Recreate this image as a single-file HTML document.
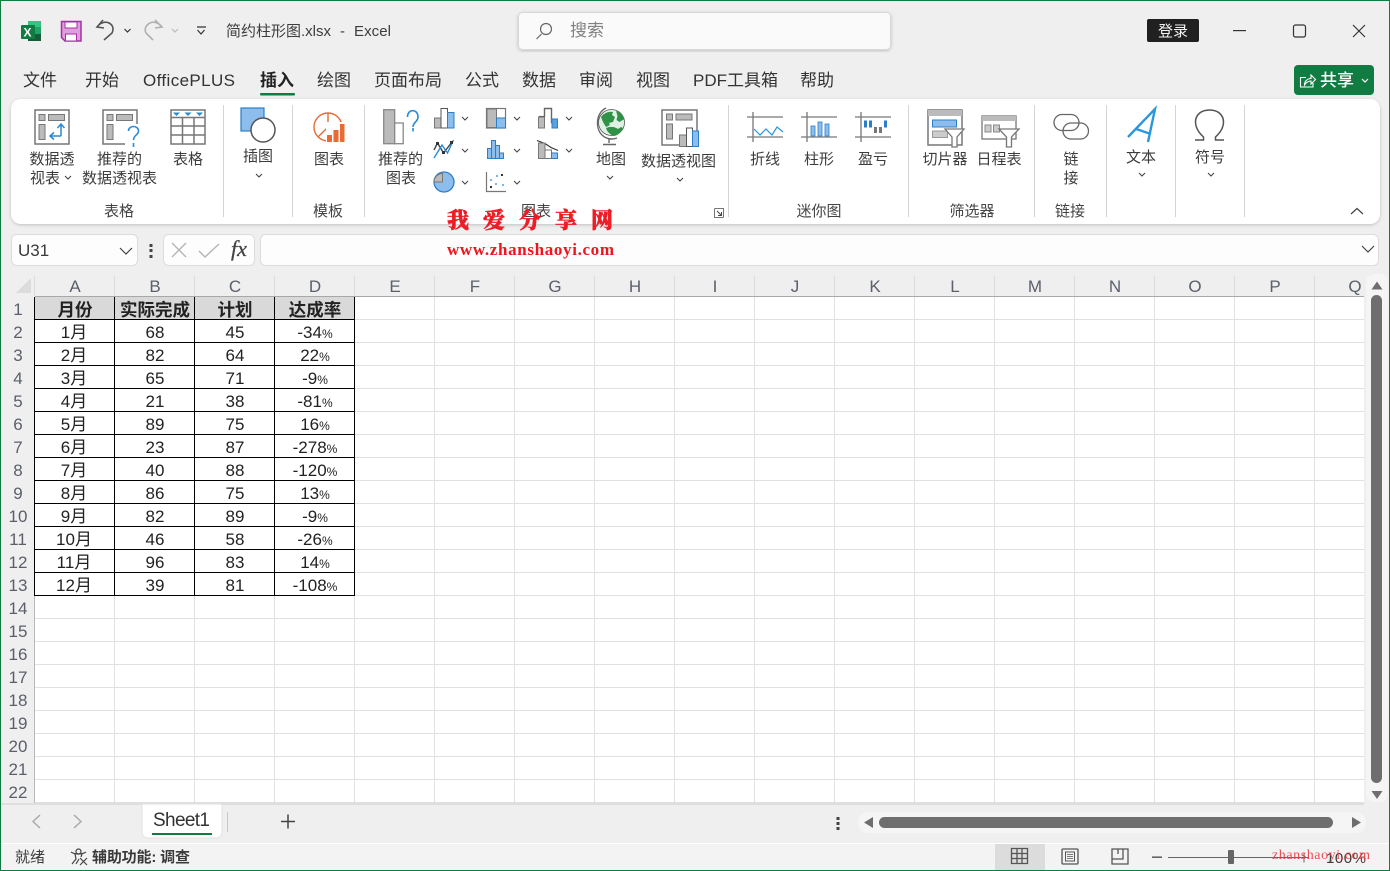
<!DOCTYPE html>
<html><head><meta charset="utf-8"><style>
html,body{margin:0;padding:0;width:1390px;height:871px;overflow:hidden;background:#efefef}
svg{display:block}
text{font-family:"Liberation Sans","Noto Sans CJK SC",sans-serif;fill:#3a3a3a}
.t{font-size:17px;fill:#333}
.r{font-size:15px;text-anchor:middle;fill:#3c3c3c}
.g{font-size:15px;text-anchor:middle;fill:#444}
.c{font-size:17px;text-anchor:middle;fill:#222}
.h{font-size:17.500px;text-anchor:middle;fill:#222;font-weight:700}
.ch{font-size:17px;text-anchor:middle;fill:#5a5f6a}
.rh{font-size:17px;text-anchor:middle;fill:#5a5f6a}
.p{font-size:12px}
.wm{font-family:"Noto Serif CJK SC","Liberation Serif",serif;font-size:22px;font-weight:900;fill:#ee1c25;text-anchor:middle;stroke:#ee1c25;stroke-width:.5px}
</style></head><body>
<svg width="1390" height="871" viewBox="0 0 1390 871" xmlns="http://www.w3.org/2000/svg">
<defs>
<pattern id="grid" x="35" y="297" width="80" height="23" patternUnits="userSpaceOnUse">
<rect width="80" height="23" fill="#fff"/>
<rect x="79" width="1" height="23" fill="#e0e0e0"/>
<rect y="22" width="80" height="1" fill="#e0e0e0"/>
</pattern>
<filter id="sh" x="-2%" y="-8%" width="104%" height="116%"><feDropShadow dx="0" dy="1" stdDeviation="1.500" flood-color="#000" flood-opacity=".2"/></filter>
</defs>
<rect width="1390" height="871" fill="#efefef"/>

<!-- title bar -->
<g>
<rect x="28" y="21" width="13" height="20" rx="1" fill="#21a366"/>
<rect x="28" y="21" width="13" height="6" fill="#33c481"/>
<rect x="28" y="34" width="13" height="7" fill="#185c37"/>
<rect x="21" y="25" width="14" height="14" rx="1" fill="#107c41"/>
<text x="23.500" y="36.500" style="font-size:12px;font-weight:700;fill:#fff">X</text>
<path d="M61.500 21.500h19.500v19.500h-16l-3.500-3.500z" fill="#df9fdc" stroke="#a62ea6" stroke-width="1.500"/>
<rect x="65" y="22" width="12" height="6" fill="#fff" stroke="#a62ea6"/>
<rect x="65.500" y="34" width="11" height="7" fill="#fff" stroke="#a62ea6"/>
<path d="M103 20l-6 7 7 1M97 27c3-4 8-6 12-4 4 2 5 6 3 10l-8 7" fill="none" stroke="#555" stroke-width="1.600"/>
<path d="M124.500 29l3 3 3-3" fill="none" stroke="#333" stroke-width="1.200"/>
<path d="M155 20l7 7-7 1M162 27c-3-4-8-6-12-4-4 2-6 6-4 10l7 7" fill="none" stroke="#b0b0b0" stroke-width="1.600"/>
<path d="M172 29l3 3 3-3" fill="none" stroke="#bbb" stroke-width="1.200"/>
<path d="M197 27h9M197.500 30l3.500 4 3.500-4" fill="none" stroke="#333" stroke-width="1.200"/>
<text x="226" y="36" style="font-size:15px;fill:#3c3c3c">简约柱形图.xlsx</text>
<text x="340" y="36" style="font-size:15px;fill:#3c3c3c">-</text>
<text x="354" y="36" style="font-size:15px;fill:#3c3c3c" textLength="37">Excel</text>

<rect x="518.500" y="12.500" width="372" height="37" rx="4" fill="#fafafa" stroke="#d8d8d8" filter="url(#sh)"/>
<circle cx="546" cy="29" r="5.500" fill="none" stroke="#666" stroke-width="1.200"/>
<path d="M541.500 34l-5 5" stroke="#666" stroke-width="1.200"/>
<text x="570" y="36" style="font-size:17px;fill:#808080">搜索</text>

<rect x="1147" y="19" width="52" height="23" rx="2" fill="#202020"/>
<text x="1173" y="36" style="font-size:15px;fill:#f2f2f2;text-anchor:middle">登录</text>
<rect x="1233" y="30" width="13" height="1.200" fill="#333"/>
<rect x="1293.500" y="25" width="12" height="12" rx="2" fill="none" stroke="#333" stroke-width="1.200"/>
<path d="M1353 25l12 12M1365 25l-12 12" stroke="#333" stroke-width="1.200"/>
</g>

<!-- tabs -->
<g class="tabs">
<text class="t" x="23" y="86">文件</text>
<text class="t" x="85" y="86">开始</text>
<text class="t" x="143" y="86" textLength="92">OfficePLUS</text>
<text class="t" x="260" y="86" style="font-weight:700;fill:#222">插入</text>
<rect x="260" y="93" width="35" height="2.500" fill="#107c41" rx="1"/>
<text class="t" x="317" y="86">绘图</text>
<text class="t" x="374" y="86">页面布局</text>
<text class="t" x="465" y="86">公式</text>
<text class="t" x="522" y="86">数据</text>
<text class="t" x="579" y="86">审阅</text>
<text class="t" x="636" y="86">视图</text>
<text class="t" x="693" y="86">PDF工具箱</text>
<text class="t" x="800" y="86">帮助</text>
<rect x="1294" y="65" width="80" height="30" rx="4" fill="#107c41"/>
<path d="M1306 77.500h-5.500v9.500h12.500v-4M1304.500 85c0-4 3-6.500 6.500-6.500v-3.500l4.500 4.500-4.500 4.500v-3c-2.500 0-4.500 1-6.500 4z" fill="none" stroke="#fff" stroke-width="1.100"/>
<text x="1337" y="86" style="font-size:17px;font-weight:500;fill:#fff;text-anchor:middle">共享</text>
<path d="M1362 79l3 3 3-3" fill="none" stroke="#fff" stroke-width="1.200"/>
</g>

<!-- ribbon -->
<rect x="11" y="99" width="1369" height="125" rx="10" fill="#fff" filter="url(#sh)"/>
<g fill="#d4d4d4">
<rect x="223" y="105" width="1" height="112"/><rect x="292" y="105" width="1" height="112"/>
<rect x="364" y="105" width="1" height="112"/><rect x="728" y="105" width="1" height="112"/>
<rect x="908" y="105" width="1" height="112"/><rect x="1034" y="105" width="1" height="112"/>
<rect x="1106" y="105" width="1" height="112"/><rect x="1175" y="105" width="1" height="112"/>
<rect x="1244" y="105" width="1" height="112"/>
</g>

<!-- pivot -->
<g stroke="#777" stroke-width="1.500" fill="#fff">
<rect x="35" y="110" width="34" height="34"/>
<g fill="#bbb" stroke-width="1"><rect x="39" y="114.500" width="6" height="6"/><rect x="48.500" y="114.500" width="16" height="6"/><rect x="39" y="124.500" width="6" height="15"/></g>
<rect x="103" y="110" width="34" height="34"/>
<g fill="#bbb" stroke-width="1"><rect x="107" y="114.500" width="6" height="6"/><rect x="116.500" y="114.500" width="16" height="6"/><rect x="107" y="124.500" width="6" height="15"/></g>
</g>
<path d="M61 136V125M57.500 128l3.500-4 3.500 4M61 136H51M54 132.500l-4 3.500 4 3.500" fill="none" stroke="#2a8ad4" stroke-width="1.500"/>
<rect x="125" y="124" width="16" height="23" fill="#fff"/>
<path d="M128.500 131c0-6 10-6 10 0 0 4-5 4-5 9M133.500 143v4" fill="none" stroke="#2a8ad4" stroke-width="1.600"/>
<!-- table -->
<g fill="none" stroke="#777" stroke-width="1.500">
<rect x="171" y="110" width="34" height="34" fill="#fff"/>
<path d="M171 117.500h34M171 126h34M171 135h34M182.500 117.500v26.500M194 117.500v26.500"/>
</g>
<path d="M173 112.500h7l-3.500 3.500zM184.500 112.500h7l-3.500 3.500zM196 112.500h7l-3.500 3.500z" fill="#2a8ad4"/>
<!-- illustration -->
<rect x="241" y="108" width="23" height="23" fill="#8dbdec" stroke="#2a7fc9" stroke-width="1.200"/>
<circle cx="263" cy="130" r="12" fill="#fff" stroke="#555" stroke-width="1.500"/>
<!-- charts template -->
<g fill="none" stroke="#ea6a35" stroke-width="1.400">
<circle cx="328" cy="127" r="14"/><path d="M328 113V127L341 122M328 127l-10 10"/>
</g>
<rect x="326" y="122" width="19" height="21" fill="#fff"/>
<path d="M327 135h5v7h-5zM333.500 130h5v12h-5zM340 124h4.500v18H340z" fill="#ea6a35"/>
<!-- recommended chart -->
<rect x="383.700" y="109.700" width="11" height="34" fill="#bbb" stroke="#888" stroke-width="1.300"/>
<rect x="394.700" y="123" width="8.500" height="20.700" fill="#fff" stroke="#888" stroke-width="1.300"/>
<path d="M407.500 117c0-8.500 10.500-8.500 10.500 0 0 5-5 5-5 10M413 128v3.500" fill="none" stroke="#2a8ad4" stroke-width="1.600"/>
<!-- col -->
<rect x="434.500" y="118" width="6.500" height="10" fill="#bbb" stroke="#777"/>
<rect x="441" y="108.500" width="6.500" height="19.500" fill="#fff" stroke="#555"/>
<rect x="447.500" y="112.500" width="6.500" height="15.500" fill="#8dbdec" stroke="#2a7fc9"/>
<!-- line -->
<path d="M434 150l3.500-7 6 10 8.500-11" fill="none" stroke="#444" stroke-width="1.400"/>
<path d="M434 158l8-13 5.500 8 6-13" fill="none" stroke="#2a8ad4" stroke-width="1.400"/>
<g fill="#333"><rect x="436" y="142" width="3" height="3"/><rect x="442" y="151" width="3" height="3"/><rect x="450" y="141" width="3" height="3"/></g>
<!-- pie -->
<circle cx="444" cy="182" r="10" fill="#8dbdec" stroke="#2a7fc9" stroke-width="1.300"/>
<path d="M434 182a8.500 8.500 0 0 1 8.500-8.500v8.500z" fill="#bbb" stroke="#777"/>
<!-- treemap -->
<rect x="486.500" y="108.500" width="19" height="19.500" fill="#fff" stroke="#777" stroke-width="1.200"/>
<rect x="487" y="109" width="9.500" height="18.500" fill="#bbb" stroke="#777"/>
<rect x="496.500" y="118" width="9" height="10" fill="#8dbdec" stroke="#2a7fc9"/>
<!-- histogram -->
<path d="M487.500 148.500h4v10h-4zM491.500 140.500h4v18h-4zM495.500 145.500h4v13h-4zM499.500 153h4v5.500h-4z" fill="#8dbdec" stroke="#2a7fc9"/>
<!-- scatter -->
<path d="M486.500 172v19.500H506" fill="none" stroke="#777" stroke-width="1.200"/>
<g fill="#333"><rect x="490" y="186" width="2" height="2"/><rect x="501" y="174" width="2" height="2"/></g>
<g fill="#7ab5ea"><rect x="490" y="179" width="2" height="2"/><rect x="495" y="183" width="2" height="2"/><rect x="502" y="184" width="2" height="2"/><rect x="496" y="175" width="2" height="2"/></g>
<!-- waterfall -->
<rect x="538.500" y="117" width="6" height="11" fill="#bbb" stroke="#777"/>
<path d="M544.500 117v-8.500h7v14h6" fill="none" stroke="#666" stroke-width="1.400"/>
<path d="M539 116.500h5" stroke="#666" stroke-width="1.200"/>
<rect x="552" y="119" width="5.500" height="9" fill="#5aa0de" stroke="#2a7fc9"/>
<!-- combo -->
<path d="M537 140.500l8 3 6 4 7 3" fill="none" stroke="#333" stroke-width="1.200"/>
<rect x="538.500" y="143" width="6.500" height="15.500" fill="#bbb" stroke="#777"/>
<rect x="545" y="150" width="6.500" height="8.500" fill="#fff" stroke="#777"/>
<rect x="551.500" y="153" width="6" height="5.500" fill="#8dbdec" stroke="#2a7fc9"/>
<!-- chevrons -->
<g fill="none" stroke="#444" stroke-width="1.100">
<path d="M462 117l3 3 3-3M462 149l3 3 3-3M462 181l3 3 3-3M514 117l3 3 3-3M514 149l3 3 3-3M514 181l3 3 3-3M566 117l3 3 3-3M566 149l3 3 3-3"/>
<path d="M65 176l3 3 3-3M256 174l3 3 3-3M607 176l3 3 3-3M677 178l3 3 3-3M1139 173l3 3 3-3M1208 173l3 3 3-3"/>
</g>
<!-- globe -->
<circle cx="611.500" cy="122.500" r="13" fill="#dff1e4" stroke="#555" stroke-width=".8"/>
<path d="M601 117c3-4 8-6 12-5l-1 3 3 2-2 5-4 1 1 2-4 2-3-5zM616 111c4 1 7 4 8.500 8l-5 3-3-2 1-4zM606 128c5-2 9-1 12 1l3-2 2 1c-2 5-6 8-10 8-3-2-6-4-7-8z" fill="#2f9247"/>
<path d="M606 108c-10 5-11 20-4 27 4 4 10 5 15 3M609 139v4M603 144.500h13" fill="none" stroke="#666" stroke-width="1.400"/>
<!-- pivot chart -->
<rect x="662" y="110" width="35" height="35" fill="#fff" stroke="#777" stroke-width="1.500"/>
<g fill="#bbb" stroke="#777"><rect x="666.500" y="114" width="6" height="6"/><rect x="676" y="114" width="16" height="6"/><rect x="666.500" y="124" width="6" height="15"/></g>
<rect x="679.500" y="135" width="7" height="11.500" fill="#bbb" stroke="#777"/>
<rect x="686.500" y="128" width="6" height="18.500" fill="#fff" stroke="#555"/>
<rect x="692.500" y="131" width="6" height="15.500" fill="#8dbdec" stroke="#2a7fc9"/>
<!-- launcher -->
<path d="M714.500 208.500h9v9M714.500 208.500v9h9" fill="none" stroke="#777"/>
<path d="M717 211l4.500 4.500M721.500 212v3.500h-3.500" fill="none" stroke="#444"/>

<!-- sparklines -->
<g fill="none" stroke="#777" stroke-width="1.300">
<path d="M747 117h36M747 137h36M753 112v30M801 117h36M801 137h36M807 112v30M855 117h36M855 137h36M861 112v30"/>
</g>
<path d="M754 129l6 6 6-6 6 6 5-8 6 5" fill="none" stroke="#2a97dc" stroke-width="1.200"/>
<g fill="#8dbdec" stroke="#2a7fc9" stroke-width=".8"><rect x="811" y="126" width="4" height="10"/><rect x="818" y="122" width="4" height="14"/><rect x="825" y="124" width="4" height="12"/></g>
<g fill="#2a7fc9"><rect x="864" y="120.500" width="3" height="7"/><rect x="869" y="120.500" width="3" height="7"/><rect x="884" y="120.500" width="3" height="7"/></g>
<g fill="#777"><rect x="874" y="127" width="3" height="6"/><rect x="879" y="127" width="3" height="6"/></g>

<!-- slicer -->
<rect x="928" y="110" width="34" height="35" fill="#fff" stroke="#777" stroke-width="1.500"/>
<rect x="928" y="110" width="34" height="6" fill="#bbb"/>
<rect x="932.500" y="120" width="24" height="7" fill="#8dbdec" stroke="#2a7fc9"/>
<rect x="932.500" y="131" width="15" height="6.500" fill="#ccc" stroke="#999"/>
<path d="M945 129h19l-7 8v10h-5v-10z" fill="#fff" stroke="#777" stroke-width="1.300"/>
<!-- timeline -->
<rect x="982" y="116" width="34" height="23" fill="#fff" stroke="#777" stroke-width="1.300"/>
<rect x="982" y="116" width="34" height="5" fill="#bbb"/>
<rect x="985" y="125" width="6" height="7" fill="#ccc" stroke="#888"/>
<rect x="993.500" y="125" width="6" height="7" fill="#ccc" stroke="#888"/>
<path d="M999 129h20l-7.500 8v10h-5v-10z" fill="#fff" stroke="#777" stroke-width="1.300"/>
<!-- link -->
<g fill="none" stroke="#666" stroke-width="1.300">
<rect x="1054" y="114.500" width="25" height="16" rx="8"/>
<rect x="1063" y="123" width="25.500" height="16" rx="8"/>
</g>
<!-- text A -->
<path d="M1128 137L1155 109L1148 142M1136 129L1151 134" fill="none" stroke="#2a97dc" stroke-width="2.400"/>
<!-- omega -->
<path d="M1195 140h8.500v-3C1198 132 1195.500 127 1195.500 122 1195.500 115 1201 110 1209.500 110S1223.500 115 1223.500 122C1223.500 127 1221 132 1215.500 137v3h8.500" fill="none" stroke="#555" stroke-width="1.500"/>
<!-- collapse -->
<path d="M1351 214l6-5.500 6 5.500" fill="none" stroke="#444" stroke-width="1.200"/>

<!-- ribbon labels -->
<text class="r" x="52" y="164">数据透</text><text class="r" x="45" y="183">视表</text>
<text class="r" x="119.500" y="164">推荐的</text><text class="r" x="119.500" y="183">数据透视表</text>
<text class="r" x="188" y="164">表格</text><text class="r" x="258" y="161">插图</text><text class="r" x="329" y="164">图表</text>
<text class="r" x="400.500" y="164">推荐的</text><text class="r" x="401" y="183">图表</text>
<text class="r" x="611" y="164">地图</text><text class="r" x="678.500" y="166">数据透视图</text>
<text class="r" x="765" y="164">折线</text><text class="r" x="819" y="164">柱形</text><text class="r" x="873" y="164">盈亏</text>
<text class="r" x="945" y="164">切片器</text><text class="r" x="999" y="164">日程表</text>
<text class="r" x="1071" y="164">链</text><text class="r" x="1071" y="183">接</text>
<text class="r" x="1141" y="162">文本</text><text class="r" x="1210" y="162">符号</text>
<text class="g" x="119" y="216">表格</text><text class="g" x="328" y="216">模板</text><text class="g" x="536" y="216">图表</text>
<text class="g" x="819" y="216">迷你图</text><text class="g" x="972" y="216">筛选器</text><text class="g" x="1070" y="216">链接</text>

<!-- formula bar -->
<rect x="11.500" y="234.500" width="126" height="31" rx="5" fill="#fdfdfd" stroke="#dcdcdc"/>
<text x="18" y="256" style="font-size:17px;fill:#3a3a3a">U31</text>
<path d="M120 248l6 6 6-6" fill="none" stroke="#444" stroke-width="1.200"/>
<g fill="#444"><rect x="149.500" y="244" width="3" height="3"/><rect x="149.500" y="249" width="3" height="3"/><rect x="149.500" y="255" width="3" height="3"/></g>
<rect x="163.500" y="234.500" width="91" height="31" rx="5" fill="#fdfdfd" stroke="#dcdcdc"/>
<path d="M172 243l14 14M186 243l-14 14" stroke="#b5b5b5" stroke-width="1.400"/>
<path d="M199 251l6 6 14-13" fill="none" stroke="#b5b5b5" stroke-width="1.400"/>
<text x="231" y="256" style="font-family:'Liberation Serif',serif;font-size:22px;font-style:italic;fill:#444;stroke:#444;stroke-width:.3px">fx</text>
<rect x="260.500" y="234.500" width="1118" height="31" rx="5" fill="#fdfdfd" stroke="#dcdcdc"/>
<path d="M1362 246l6 6 6-6" fill="none" stroke="#444" stroke-width="1.200"/>

<!-- grid -->
<rect x="35" y="297" width="1329" height="506" fill="url(#grid)"/>
<rect x="1" y="803" width="1363" height="2" fill="#dedede"/>
<!-- headers -->
<rect x="35" y="296" width="1329" height="1" fill="#a8a8a8"/>
<rect x="34" y="297" width="1" height="506" fill="#b8b8b8"/>
<path d="M31 278v15H16z" fill="#dcdcdc"/>
<g fill="#dcdcdc"><rect x="34" y="276" width="1" height="20"/><rect x="114" y="276" width="1" height="20"/><rect x="194" y="276" width="1" height="20"/><rect x="274" y="276" width="1" height="20"/><rect x="354" y="276" width="1" height="20"/><rect x="434" y="276" width="1" height="20"/><rect x="514" y="276" width="1" height="20"/><rect x="594" y="276" width="1" height="20"/><rect x="674" y="276" width="1" height="20"/><rect x="754" y="276" width="1" height="20"/><rect x="834" y="276" width="1" height="20"/><rect x="914" y="276" width="1" height="20"/><rect x="994" y="276" width="1" height="20"/><rect x="1074" y="276" width="1" height="20"/><rect x="1154" y="276" width="1" height="20"/><rect x="1234" y="276" width="1" height="20"/><rect x="1314" y="276" width="1" height="20"/></g>
<g>
<text class="ch" x="75" y="292">A</text><text class="ch" x="155" y="292">B</text><text class="ch" x="235" y="292">C</text><text class="ch" x="315" y="292">D</text><text class="ch" x="395" y="292">E</text><text class="ch" x="475" y="292">F</text><text class="ch" x="555" y="292">G</text><text class="ch" x="635" y="292">H</text><text class="ch" x="715" y="292">I</text><text class="ch" x="795" y="292">J</text><text class="ch" x="875" y="292">K</text><text class="ch" x="955" y="292">L</text><text class="ch" x="1035" y="292">M</text><text class="ch" x="1115" y="292">N</text><text class="ch" x="1195" y="292">O</text><text class="ch" x="1275" y="292">P</text><text class="ch" x="1355" y="292">Q</text>
</g>
<g>
<text class="rh" x="18" y="315">1</text><text class="rh" x="18" y="338">2</text><text class="rh" x="18" y="361">3</text><text class="rh" x="18" y="384">4</text><text class="rh" x="18" y="407">5</text><text class="rh" x="18" y="430">6</text><text class="rh" x="18" y="453">7</text><text class="rh" x="18" y="476">8</text><text class="rh" x="18" y="499">9</text><text class="rh" x="18" y="522">10</text><text class="rh" x="18" y="545">11</text><text class="rh" x="18" y="568">12</text><text class="rh" x="18" y="591">13</text><text class="rh" x="18" y="614">14</text><text class="rh" x="18" y="637">15</text><text class="rh" x="18" y="660">16</text><text class="rh" x="18" y="683">17</text><text class="rh" x="18" y="706">18</text><text class="rh" x="18" y="729">19</text><text class="rh" x="18" y="752">20</text><text class="rh" x="18" y="775">21</text><text class="rh" x="18" y="798">22</text>
</g>

<!-- table -->
<rect x="35" y="297" width="320" height="22" fill="#d9d9d9"/>
<g fill="#000">
<rect x="34" y="297" width="1" height="299"/><rect x="114" y="297" width="1" height="299"/><rect x="194" y="297" width="1" height="299"/><rect x="274" y="297" width="1" height="299"/><rect x="354" y="297" width="1" height="299"/>
<rect x="34" y="319" width="321" height="1"/><rect x="34" y="342" width="321" height="1"/><rect x="34" y="365" width="321" height="1"/><rect x="34" y="388" width="321" height="1"/><rect x="34" y="411" width="321" height="1"/><rect x="34" y="434" width="321" height="1"/><rect x="34" y="457" width="321" height="1"/><rect x="34" y="480" width="321" height="1"/><rect x="34" y="503" width="321" height="1"/><rect x="34" y="526" width="321" height="1"/><rect x="34" y="549" width="321" height="1"/><rect x="34" y="572" width="321" height="1"/><rect x="34" y="595" width="321" height="1"/>
</g>
<text class="h" x="75" y="316">月份</text><text class="h" x="155" y="316">实际完成</text><text class="h" x="235" y="316">计划</text><text class="h" x="315" y="316">达成率</text>
<g>
<text class="c" x="74" y="338">1月</text><text class="c" x="155" y="338">68</text><text class="c" x="235" y="338">45</text><text class="c" x="315" y="338">-34<tspan class="p">%</tspan></text>
<text class="c" x="74" y="361">2月</text><text class="c" x="155" y="361">82</text><text class="c" x="235" y="361">64</text><text class="c" x="315" y="361">22<tspan class="p">%</tspan></text>
<text class="c" x="74" y="384">3月</text><text class="c" x="155" y="384">65</text><text class="c" x="235" y="384">71</text><text class="c" x="315" y="384">-9<tspan class="p">%</tspan></text>
<text class="c" x="74" y="407">4月</text><text class="c" x="155" y="407">21</text><text class="c" x="235" y="407">38</text><text class="c" x="315" y="407">-81<tspan class="p">%</tspan></text>
<text class="c" x="74" y="430">5月</text><text class="c" x="155" y="430">89</text><text class="c" x="235" y="430">75</text><text class="c" x="315" y="430">16<tspan class="p">%</tspan></text>
<text class="c" x="74" y="453">6月</text><text class="c" x="155" y="453">23</text><text class="c" x="235" y="453">87</text><text class="c" x="315" y="453">-278<tspan class="p">%</tspan></text>
<text class="c" x="74" y="476">7月</text><text class="c" x="155" y="476">40</text><text class="c" x="235" y="476">88</text><text class="c" x="315" y="476">-120<tspan class="p">%</tspan></text>
<text class="c" x="74" y="499">8月</text><text class="c" x="155" y="499">86</text><text class="c" x="235" y="499">75</text><text class="c" x="315" y="499">13<tspan class="p">%</tspan></text>
<text class="c" x="74" y="522">9月</text><text class="c" x="155" y="522">82</text><text class="c" x="235" y="522">89</text><text class="c" x="315" y="522">-9<tspan class="p">%</tspan></text>
<text class="c" x="74" y="545">10月</text><text class="c" x="155" y="545">46</text><text class="c" x="235" y="545">58</text><text class="c" x="315" y="545">-26<tspan class="p">%</tspan></text>
<text class="c" x="74" y="568">11月</text><text class="c" x="155" y="568">96</text><text class="c" x="235" y="568">83</text><text class="c" x="315" y="568">14<tspan class="p">%</tspan></text>
<text class="c" x="74" y="591">12月</text><text class="c" x="155" y="591">39</text><text class="c" x="235" y="591">81</text><text class="c" x="315" y="591">-108<tspan class="p">%</tspan></text>
</g>

<!-- v scrollbar -->
<rect x="1366" y="274" width="22" height="528" rx="8" fill="#f5f5f5"/>
<path d="M1371.500 289.500l5.500-8 5.500 8z" fill="#6e6e6e"/>
<rect x="1371" y="295" width="11" height="488" rx="5.500" fill="#6e6e6e"/>
<path d="M1371.500 791h11l-5.500 8z" fill="#6e6e6e"/>

<!-- sheet bar -->
<path d="M40 815l-7 6.500 7 6.500M74 815l7 6.500-7 6.500" fill="none" stroke="#a8a8a8" stroke-width="1.400"/>
<path d="M142 804h80v28a6 6 0 0 1-6 6h-68a6 6 0 0 1-6-6z" fill="#fff" stroke="#e2e2e2"/>
<text x="153" y="826" style="font-size:19px;fill:#333" textLength="57">Sheet1</text>
<rect x="152" y="833" width="60" height="2" fill="#107c41"/>
<rect x="227" y="812" width="1" height="20" fill="#c8c8c8"/>
<path d="M281 821.500h14M288 814.500v14" stroke="#444" stroke-width="1.500"/>
<g fill="#444"><rect x="836.500" y="817" width="3" height="3"/><rect x="836.500" y="822" width="3" height="3"/><rect x="836.500" y="827" width="3" height="3"/></g>
<rect x="858" y="812" width="508" height="21" rx="10" fill="#f5f5f5"/>
<path d="M873 817v11l-9-5.500z" fill="#6e6e6e"/>
<rect x="879" y="817" width="454" height="11" rx="5.500" fill="#6e6e6e"/>
<path d="M1352 817v11l9-5.500z" fill="#6e6e6e"/>

<!-- status bar -->
<rect x="1" y="843" width="1388" height="27" fill="#f3f3f3"/>
<rect x="1" y="843" width="1388" height="1" fill="#fff"/>
<text x="15" y="862" style="font-size:15px;fill:#3c3c3c">就绪</text>
<g fill="none" stroke="#444" stroke-width="1.200">
<circle cx="78.500" cy="851.500" r="2.500"/>
<path d="M71 852c3 2 5 2 7 2s5 0 8-2M75 854l1 5-4 5M82 854l-1 3M79 859l-3 5"/>
<path d="M80 858l7 7M87 858l-7 7"/>
</g>
<text x="92" y="862" style="font-size:15px;font-weight:700;fill:#3a3a3a" textLength="98">辅助功能: 调查</text>
<rect x="995" y="844" width="50" height="26" fill="#dcdcdc"/>
<g fill="none" stroke="#555" stroke-width="1.300">
<path d="M1011.500 848.500h16v15h-16zM1011.500 853.500h16M1011.500 858.500h16M1017 848.500v15M1022 848.500v15"/>
<rect x="1062" y="849" width="16" height="15" rx="1"/>
<rect x="1065.500" y="852" width="9" height="9" stroke-width="1"/>
<path d="M1067 854.500h6M1067 856.500h6M1067 858.500h6" stroke-width=".8"/>
<path d="M1112 849h16v15h-16zM1112 859h11v-10M1118 849v5"/>
</g>
<rect x="1152" y="856.500" width="10" height="1.300" fill="#444"/>
<rect x="1168" y="857" width="135" height="1" fill="#666"/>
<rect x="1228" y="850" width="6" height="14" rx="1" fill="#666"/>
<path d="M1299 857.500h10M1304 852.500v10" stroke="#666"/>
<text x="1326" y="863" style="font-size:15px;fill:#3a3a3a" textLength="40">100%</text>
<text x="1272" y="859" style="font-family:'Liberation Serif',serif;font-size:14px;fill:#ee3b43;opacity:.9" textLength="98">zhanshaoyi.com</text>

<!-- watermark -->
<text class="wm" x="458" y="228">我</text><text class="wm" x="494" y="228">爱</text><text class="wm" x="530" y="228">分</text><text class="wm" x="566" y="228">享</text><text class="wm" x="602" y="228">网</text>
<text x="447" y="255" textLength="167" style="font-family:'Liberation Serif',serif;font-size:17px;font-weight:700;fill:#f0141e">www.zhanshaoyi.com</text>

<!-- window border -->
<rect x=".5" y=".5" width="1389" height="870" fill="none" stroke="#107c41"/>
</svg>
</body></html>
